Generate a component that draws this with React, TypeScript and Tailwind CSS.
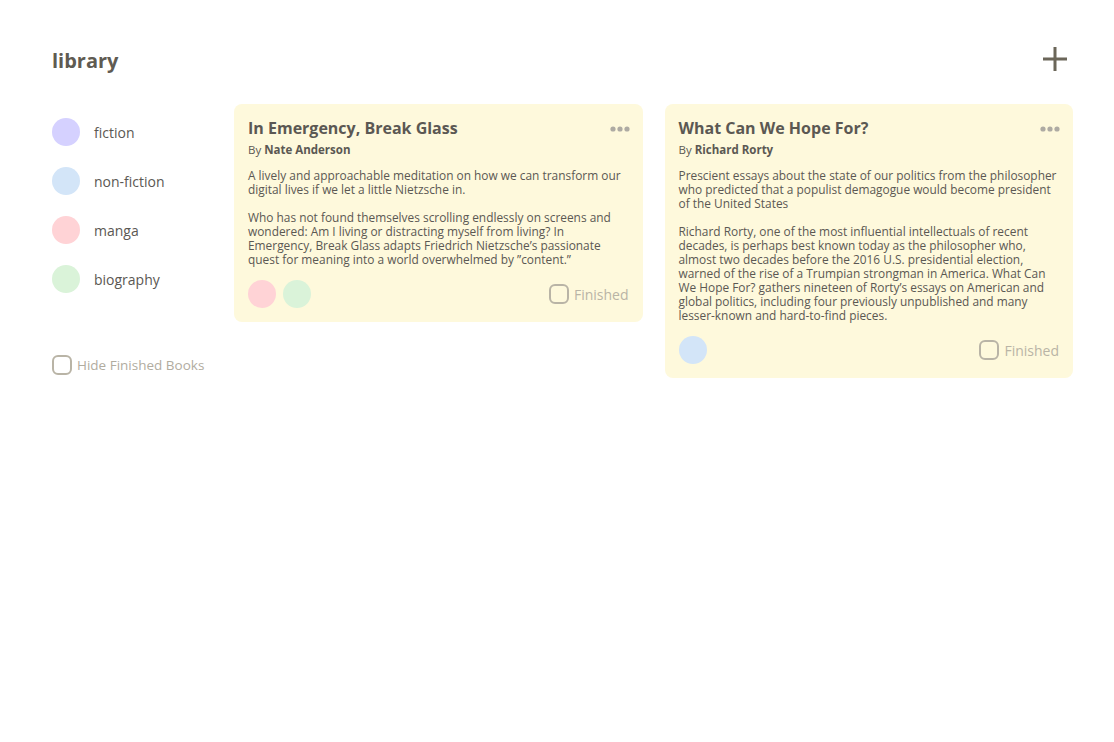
import { useState } from 'react';

type Category = { name: string; color: string };

type Book = {
  title: string;
  author: string;
  description: string;
  categories: string[];
  finished: boolean;
};

const categories: Category[] = [
  { name: 'fiction', color: 'bg-[#d5d1ff]' },
  { name: 'non-fiction', color: 'bg-[#d3e5f8]' },
  { name: 'manga', color: 'bg-[#ffd3d6]' },
  { name: 'biography', color: 'bg-[#daf3d9]' },
];

const books: Book[] = [
  {
    title: 'In Emergency, Break Glass',
    author: 'Nate Anderson',
    description:
      'A lively and approachable meditation on how we can transform our digital lives if we let a little Nietzsche in.\n\nWho has not found themselves scrolling endlessly on screens and wondered: Am I living or distracting myself from living? In Emergency, Break Glass adapts Friedrich Nietzsche\u2019s passionate quest for meaning into a world overwhelmed by \u201dcontent.\u201d',
    categories: ['manga', 'biography'],
    finished: false,
  },
  {
    title: 'What Can We Hope For?',
    author: 'Richard Rorty',
    description:
      'Prescient essays about the state of our politics from the philosopher who predicted that a populist demagogue would become president of the United States\n\nRichard Rorty, one of the most influential intellectuals of recent decades, is perhaps best known today as the philosopher who, almost two decades before the 2016 U.S. presidential election, warned of the rise of a Trumpian strongman in America. What Can We Hope For? gathers nineteen of Rorty\u2019s essays on American and global politics, including four previously unpublished and many lesser-known and hard-to-find pieces.',
    categories: ['non-fiction'],
    finished: false,
  },
];

function colorOf(name: string) {
  return categories.find((c) => c.name === name)?.color ?? 'bg-gray-200';
}

function Checkbox({ checked, onChange }: { checked: boolean; onChange: () => void }) {
  return (
    <button
      onClick={onChange}
      className="w-5 h-5 rounded-[6px] border-2 border-[#b9b4a6] bg-transparent flex items-center justify-center"
    >
      {checked && <span className="w-2.5 h-2.5 rounded-[2px] bg-[#b9b4a6]" />}
    </button>
  );
}

function BookCard({ book }: { book: Book }) {
  const [finished, setFinished] = useState(book.finished);
  return (
    <div className="flex-1 bg-[#fef9dc] rounded-lg px-[14px] pt-[14px] pb-[14px] text-[#5b5853]">
      <div className="flex items-start justify-between">
        <h2 className="text-[16px] leading-[20px] font-bold">{book.title}</h2>
        <svg width="20" height="6" viewBox="0 0 20 6" className="mt-[8px] mr-[-1px]">
          <circle cx="3" cy="3" r="2.6" fill="#aeaba3" />
          <circle cx="10" cy="3" r="2.6" fill="#aeaba3" />
          <circle cx="17" cy="3" r="2.6" fill="#aeaba3" />
        </svg>
      </div>
      <p className="text-[11.5px] leading-[14px] mt-[5px]">
        By <span className="font-bold">{book.author}</span>
      </p>
      <p className="text-[11.9px] leading-[14px] mt-[11px] whitespace-pre-line">{book.description}</p>
      <div className="flex items-center justify-between mt-[14px]">
        <div className="flex gap-[7px]">
          {book.categories.map((c) => (
            <span key={c} className={`w-7 h-7 rounded-full ${colorOf(c)}`} />
          ))}
        </div>
        <label className="flex items-center gap-[5px] text-[14px] text-[#b9b4a6]">
          <Checkbox checked={finished} onChange={() => setFinished(!finished)} />
          Finished
        </label>
      </div>
    </div>
  );
}

export default function App() {
  const [hideFinished, setHideFinished] = useState(false);
  return (
    <div className="min-h-screen bg-white font-['Open_Sans',sans-serif] text-[#5b5853] px-[52px] pt-[46px]">
      <div className="flex items-center justify-between">
        <h1 className="text-[20px] font-bold text-[#5f5b52]">library</h1>
        <button className="mr-[-6px] mt-[-4px]">
          <svg width="26" height="26" viewBox="0 0 26 26">
            <path d="M13 1v24M1 13h24" stroke="#6b6659" strokeWidth="3" />
          </svg>
        </button>
      </div>
      <div className="flex mt-[28px] mr-[-11px]">
        <div className="w-[182px] shrink-0 pt-[14px]">
          <ul className="flex flex-col gap-[21px]">
            {categories.map((c) => (
              <li key={c.name} className="flex items-center gap-[14px]">
                <span className={`w-7 h-7 rounded-full ${c.color}`} />
                <span className="text-[14px] text-[#5b5853]">{c.name}</span>
              </li>
            ))}
          </ul>
          <label className="flex items-center gap-[5px] mt-[62px] text-[13.5px] text-[#b1ac9f]">
            <Checkbox checked={hideFinished} onChange={() => setHideFinished(!hideFinished)} />
            Hide Finished Books
          </label>
        </div>
        <div className="flex-1 flex items-start gap-[22px]">
          {books.map((b) => (
            <BookCard key={b.title} book={b} />
          ))}
        </div>
      </div>
    </div>
  );
}
